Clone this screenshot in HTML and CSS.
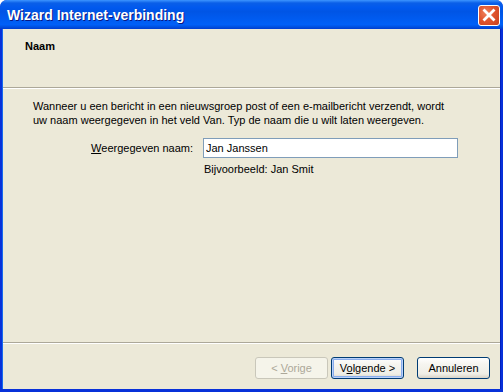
FILE: index.html
```html
<!DOCTYPE html>
<html lang="nl">
<head>
    <meta charset="UTF-8">
    <title>Wizard Internet-verbinding</title>
    <link rel="stylesheet" href="styles.css">
</head>
<body>
    <div class="venster">
        <!-- Titelbalk -->
        <div class="titelbalk">
            <span class="titel">Wizard Internet-verbinding</span>
            <button class="sluiten" aria-label="Sluiten">
                <svg width="14" height="14" viewBox="0 0 14 14">
                    <path d="M2.5 2.5 L11.5 11.5 M11.5 2.5 L2.5 11.5" stroke="#fff" stroke-width="2.8" stroke-linecap="square"/>
                </svg>
            </button>
        </div>

        <div class="inhoud">
            <!-- Kop -->
            <div class="kop">
                <h3>Naam</h3>
            </div>

            <!-- Pagina -->
            <div class="pagina">
                <p class="uitleg">Wanneer u een bericht in een nieuwsgroep post of een e-mailbericht verzendt, wordt uw naam weergegeven in het veld Van. Typ de naam die u wilt laten weergeven.</p>

                <div class="veld">
                    <label for="naam"><u>W</u>eergegeven naam:</label>
                    <input type="text" id="naam" value="Jan Janssen">
                </div>
                <div class="voorbeeld">Bijvoorbeeld: Jan Smit</div>
            </div>

            <!-- Knoppen -->
            <div class="knoppen">
                <button class="knop" disabled>&lt; <u>V</u>orige</button>
                <button class="knop standaard">V<u>o</u>lgende &gt;</button>
                <button class="knop annuleren">Annuleren</button>
            </div>
        </div>
    </div>
</body>
</html>
```

FILE: styles.css
```css
body {
    margin: 0;
    padding: 0;
    background-color: #fff;
    font-family: 'Liberation Sans', Arial, sans-serif;
    font-size: 11px;
    color: #000;
}

.venster {
    width: 503px;
    height: 392px;
    display: flex;
    flex-direction: column;
    background-color: #0831d9;
    border-radius: 7px 7px 0 0;
    overflow: hidden;
}

/* Titelbalk */
.titelbalk {
    height: 29px;
    flex-shrink: 0;
    display: flex;
    align-items: center;
    justify-content: space-between;
    padding: 0 3px 0 7px;
    background: linear-gradient(to bottom, #3d95ff 0, #0a5fe8 3px, #0058ee 8px, #0055e5 40%, #0060f8 85%, #0050e0 93%, #003dd0 100%);
}

.titel {
    color: #fff;
    font-weight: bold;
    font-size: 14px;
    text-shadow: 1px 1px 0 #0a1883;
    padding-top: 1px;
}

.sluiten {
    width: 22px;
    height: 21px;
    padding: 0;
    border: 1px solid #fff;
    border-radius: 3px;
    background: radial-gradient(circle at 35% 35%, #f0835e 0, #e0552f 45%, #c8401c 100%);
    display: flex;
    align-items: center;
    justify-content: center;
    margin-top: 1px;
}

/* Inhoud */
.inhoud {
    flex: 1;
    margin: 0 2px 3px 2px;
    background-color: #ece9d8;
    display: flex;
    flex-direction: column;
    border-left: 1px solid #166aee;
    border-right: 1px solid #001fbf;
}

.kop {
    height: 59px;
    box-sizing: border-box;
    padding: 11px 22px;
    border-bottom: 1px solid #aca899;
}

.kop h3 {
    margin: 0;
    font-size: 11px;
    line-height: 13px;
    font-weight: bold;
}

.pagina {
    flex: 1;
    padding: 10px 30px 0 30px;
    border-top: 1px solid #fff;
    border-bottom: 1px solid #aca899;
}

.uitleg {
    margin: 0;
    line-height: 14px;
    width: 420px;
}

.veld {
    display: flex;
    align-items: center;
    margin-top: 11px;
    gap: 10px;
}

.veld label {
    width: 160px;
    text-align: right;
}

.veld input {
    width: 255px;
    height: 20px;
    box-sizing: border-box;
    border: 1px solid #7f9db9;
    padding: 0 2px;
    font-family: inherit;
    font-size: 11px;
    background-color: #fff;
    outline: none;
}

.voorbeeld {
    margin: 5px 0 0 171px;
    line-height: 13px;
}

/* Knoppen */
.knoppen {
    height: 46px;
    box-sizing: border-box;
    border-top: 1px solid #fff;
    display: flex;
    justify-content: flex-end;
    align-items: flex-start;
    padding: 13px 10px 0 0;
}

.knop {
    width: 73px;
    height: 22px;
    padding: 0;
    font-family: inherit;
    font-size: 11px;
    color: #000;
    border: 1px solid #003c74;
    border-radius: 3px;
    background: linear-gradient(to bottom, #ffffff 0, #f6f5f0 30%, #efeee6 80%, #d8d2c6 100%);
}

.knop:disabled {
    color: #aca899;
    border-color: #c9c7ba;
    background: #f5f4ea;
}

.knop.standaard {
    margin-left: 3px;
    box-shadow: inset 0 0 0 1px #b9d1fa, inset 0 0 0 2px #89adec;
}

.knop.annuleren {
    margin-left: 13px;
}
```
